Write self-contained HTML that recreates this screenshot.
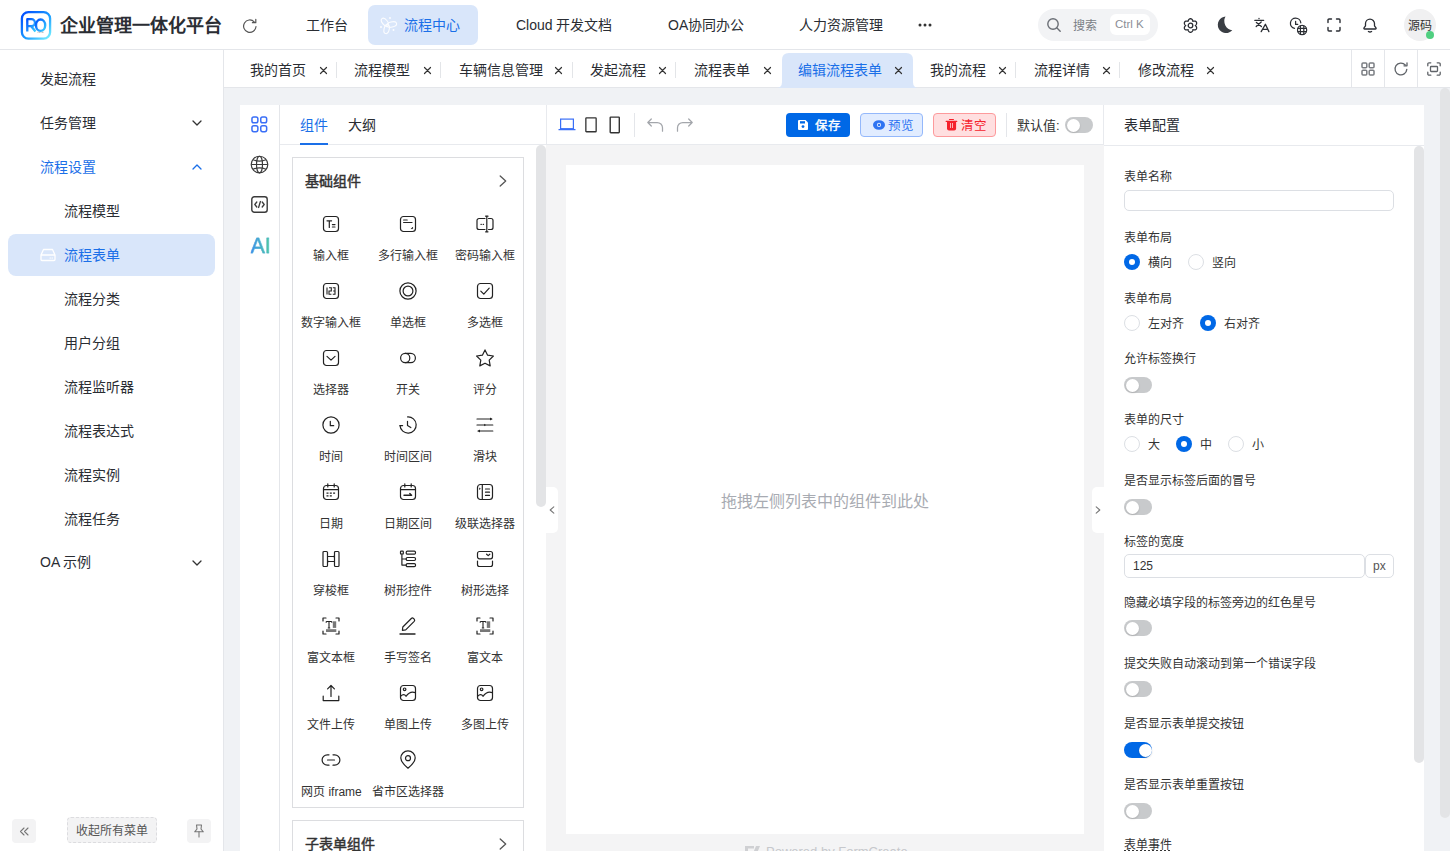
<!DOCTYPE html>
<html lang="zh-CN">
<head>
<meta charset="utf-8">
<style>
*{box-sizing:border-box;margin:0;padding:0}
html,body{width:1450px;height:851px;overflow:hidden;background:#fff}
body{font-family:"Liberation Sans",sans-serif;font-size:14px;color:#262626;position:relative}
.a{position:absolute}
svg{display:block;position:absolute;overflow:visible}
.t{position:absolute;white-space:nowrap;line-height:1}
.ic{fill:none;stroke:#333;stroke-width:1.3;stroke-linecap:round;stroke-linejoin:round}
</style>
</head>
<body>
<!-- ================= HEADER ================= -->
<div class="a" style="left:0;top:0;width:1450px;height:50px;background:#fff;border-bottom:1px solid #e4e6ea"></div>
<!-- logo -->
<svg style="left:20px;top:10px" width="32" height="31" viewBox="0 0 32 31"><defs><linearGradient id="lg" x1="0" y1="0" x2="1" y2="1"><stop offset="0" stop-color="#0048ff"/><stop offset=".55" stop-color="#1a9bff"/><stop offset="1" stop-color="#7af3ff"/></linearGradient><linearGradient id="lg2" x1="0" y1="0" x2="1" y2="1"><stop offset="0" stop-color="#0050ff"/><stop offset="1" stop-color="#3ad0ff"/></linearGradient></defs>
<rect x="1.9" y="2.1" width="28.2" height="26.6" rx="6.5" fill="none" stroke="url(#lg)" stroke-width="2.3"/>
<path d="M7.3 21.5V9.2h4.2a3.5 3.5 0 0 1 0 7H7.3M11.2 16.2l4.3 5.3" fill="none" stroke="url(#lg2)" stroke-width="2.3" stroke-linejoin="round"/>
<ellipse cx="20.6" cy="15.2" rx="4.6" ry="5.7" fill="none" stroke="url(#lg2)" stroke-width="2.4"/>
<path d="M17.5 22.3h6.5" stroke="#888" stroke-width=".6" stroke-dasharray="1 .5"/>
</svg>
<div class="t" style="left:60px;top:17px;font-size:18px;font-weight:bold;color:#2a2d33">企业管理一体化平台</div>
<!-- refresh -->
<svg style="left:242px;top:17.5px" width="16" height="16" viewBox="0 0 16 16"><path d="M14 8.5A6.2 6.2 0 1 1 12.2 3.8" fill="none" stroke="#555" stroke-width="1.2" stroke-linecap="round"/><path d="M13.8 1.3v3.4h-3.4" fill="none" stroke="#555" stroke-width="1.2" stroke-linecap="round" stroke-linejoin="round"/></svg>
<!-- nav -->
<div class="t" style="left:306px;top:18px;font-size:14px;color:#2a2d33">工作台</div>
<div class="a" style="left:368px;top:5px;width:110px;height:40px;border-radius:7px;background:#d9e6fa"></div>
<svg style="left:372px;top:10px" width="30" height="30" viewBox="0 0 30 30"><g fill="none" stroke="#fff" stroke-width="1.1" opacity=".9"><ellipse cx="13.00" cy="12.35" rx="4.82" ry="2.6" transform="rotate(-128.4 13.00 12.35)"/><ellipse cx="19.65" cy="14.50" rx="5.07" ry="2.6" transform="rotate(-13.5 19.65 14.50)"/><ellipse cx="14.65" cy="19.15" rx="4.55" ry="2.6" transform="rotate(103.1 14.65 19.15)"/><circle cx="18" cy="8" r="1" fill="#fff" stroke="none"/><circle cx="9" cy="17" r="1" fill="#fff" stroke="none"/><circle cx="21.5" cy="20" r="1" fill="#fff" stroke="none"/></g></svg>
<div class="t" style="left:404px;top:18px;font-size:14px;color:#1a6fe8">流程中心</div>
<div class="t" style="left:516px;top:18px;font-size:14px;color:#2a2d33">Cloud 开发文档</div>
<div class="t" style="left:668px;top:18px;font-size:14px;color:#2a2d33">OA协同办公</div>
<div class="t" style="left:799px;top:18px;font-size:14px;color:#2a2d33">人力资源管理</div>
<svg style="left:918px;top:23px" width="14" height="4" viewBox="0 0 14 4"><circle cx="2" cy="2" r="1.5" fill="#333"/><circle cx="7" cy="2" r="1.5" fill="#333"/><circle cx="12" cy="2" r="1.5" fill="#333"/></svg>
<!-- search -->
<div class="a" style="left:1038px;top:9px;width:120px;height:32px;border-radius:16px;background:#f2f3f5"></div>
<svg style="left:1047px;top:18px" width="14" height="14" viewBox="0 0 14 14"><circle cx="6" cy="6" r="5.2" fill="none" stroke="#6b6f76" stroke-width="1.4"/><path d="M10 10l3.2 3.2" stroke="#6b6f76" stroke-width="1.4" stroke-linecap="round"/></svg>
<div class="t" style="left:1073px;top:20px;font-size:12px;color:#7a7e85">搜索</div>
<div class="a" style="left:1110px;top:14px;width:40px;height:21px;border-radius:6px;background:#fff"></div>
<div class="t" style="left:1115px;top:19px;font-size:11.5px;color:#8a8e95">Ctrl K</div>
<!-- gear -->
<svg style="left:1182.5px;top:17.5px" width="15" height="15" viewBox="0 0 15 15"><path d="M7.50 0.70 L7.85 0.73 L8.20 0.83 L8.53 1.00 L8.83 1.22 L9.11 1.50 L9.35 1.82 L9.55 2.17 L9.70 2.55 L9.82 2.94 L9.90 3.34 L10.28 3.21 L10.68 3.12 L11.09 3.06 L11.50 3.06 L11.89 3.11 L12.27 3.21 L12.62 3.36 L12.92 3.56 L13.18 3.81 L13.39 4.10 L13.54 4.42 L13.62 4.77 L13.64 5.14 L13.60 5.52 L13.50 5.89 L13.34 6.26 L13.14 6.61 L12.89 6.93 L12.61 7.23 L12.30 7.50 L12.61 7.77 L12.89 8.07 L13.14 8.39 L13.34 8.74 L13.50 9.11 L13.60 9.48 L13.64 9.86 L13.62 10.23 L13.54 10.58 L13.39 10.90 L13.18 11.19 L12.92 11.44 L12.62 11.64 L12.27 11.79 L11.89 11.89 L11.50 11.94 L11.09 11.94 L10.68 11.88 L10.28 11.79 L9.90 11.66 L9.82 12.06 L9.70 12.45 L9.55 12.83 L9.35 13.18 L9.11 13.50 L8.83 13.78 L8.53 14.00 L8.20 14.17 L7.85 14.27 L7.50 14.30 L7.15 14.27 L6.80 14.17 L6.47 14.00 L6.17 13.78 L5.89 13.50 L5.65 13.18 L5.45 12.83 L5.30 12.45 L5.18 12.06 L5.10 11.66 L4.72 11.79 L4.32 11.88 L3.91 11.94 L3.50 11.94 L3.11 11.89 L2.73 11.79 L2.38 11.64 L2.08 11.44 L1.82 11.19 L1.61 10.90 L1.46 10.58 L1.38 10.23 L1.36 9.86 L1.40 9.48 L1.50 9.11 L1.66 8.74 L1.86 8.39 L2.11 8.07 L2.39 7.77 L2.70 7.50 L2.39 7.23 L2.11 6.93 L1.86 6.61 L1.66 6.26 L1.50 5.89 L1.40 5.52 L1.36 5.14 L1.38 4.77 L1.46 4.42 L1.61 4.10 L1.82 3.81 L2.08 3.56 L2.38 3.36 L2.73 3.21 L3.11 3.11 L3.50 3.06 L3.91 3.06 L4.32 3.12 L4.72 3.21 L5.10 3.34 L5.18 2.94 L5.30 2.55 L5.45 2.17 L5.65 1.82 L5.89 1.50 L6.17 1.22 L6.47 1.00 L6.80 0.83 L7.15 0.73 L7.50 0.70Z" fill="none" stroke="#2a2d33" stroke-width="1.3" stroke-linejoin="round"/><circle cx="7.5" cy="7.5" r="2.3" fill="none" stroke="#2a2d33" stroke-width="1.3"/></svg>
<!-- moon -->
<svg style="left:1216px;top:15px" width="18" height="19" viewBox="0 0 18 19"><path d="M9.5 1.5A8.3 8.3 0 1 0 16.3 15.3A9.3 9.3 0 0 1 9.5 1.5Z" fill="#3a3e44"/></svg>
<!-- translate -->
<svg style="left:1250px;top:12px" width="22" height="24" viewBox="0 0 22 24"><g fill="none" stroke="#2a2d33" stroke-width="1.3" stroke-linecap="round" stroke-linejoin="round"><path d="M4.8 8.3h8.9M9 6.3v.3M11.2 10L6.2 14.6M6.4 10.4l5 4.2"/><path d="M11.2 19.6l4.2-7.4 3.5 7.4M12.6 17.3h5"/></g></svg>
<!-- timezone -->
<svg style="left:1286.7px;top:12.6px" width="24" height="24" viewBox="0 0 24 24"><g fill="none" stroke="#2a2d33" stroke-width="1.25" stroke-linecap="round"><path d="M7.5 15.4A5.2 5.2 0 1 1 13.8 9.8"/><path d="M8.6 8.3v3h2.2"/></g><g fill="none" stroke="#2a2d33" stroke-width="1.2"><circle cx="15.1" cy="17" r="4.6"/><path d="M10.5 15.3h9.2M10.5 18.7h9.2M13.4 12.4v9.2M16.8 12.4v9.2"/></g></svg>
<!-- fullscreen -->
<svg style="left:1327px;top:18px" width="14" height="14" viewBox="0 0 14 14"><path d="M1 4.5V2a1 1 0 0 1 1-1h2.5M9.5 1H12a1 1 0 0 1 1 1v2.5M13 9.5V12a1 1 0 0 1-1 1H9.5M4.5 13H2a1 1 0 0 1-1-1V9.5" fill="none" stroke="#2a2d33" stroke-width="1.4" stroke-linecap="round"/></svg>
<!-- bell -->
<svg style="left:1363px;top:17.5px" width="14" height="16" viewBox="0 0 14 16"><path d="M1.6 11h10.8a.7.7 0 0 0 .6-1.1L11.5 7.8V5.6A4.5 4.5 0 0 0 2.5 5.6v2.2L1 9.9a.7.7 0 0 0 .6 1.1z" fill="none" stroke="#2a2d33" stroke-width="1.3" stroke-linejoin="round"/><path d="M5.4 13.5q1.6 1 3.2 0" fill="none" stroke="#2a2d33" stroke-width="1.3" stroke-linecap="round"/></svg>
<!-- avatar -->
<div class="a" style="left:1404px;top:9px;width:32px;height:32px;border-radius:50%;background:#f0f0f1"></div>
<div class="t" style="left:1408px;top:20px;font-size:12px;color:#333">源码</div>
<div class="a" style="left:1426px;top:31px;width:8px;height:8px;border-radius:50%;background:#50cf80"></div>

<!-- ================= SIDEBAR ================= -->
<div class="a" style="left:0;top:50px;width:224px;height:801px;background:#fff;border-right:1px solid #e4e6ea"></div>
<div class="t" style="left:40px;top:72px;font-size:14px;color:#2a2d33">发起流程</div>
<div class="t" style="left:40px;top:116px;font-size:14px;color:#2a2d33">任务管理</div>
<svg style="left:192px;top:120px" width="10" height="6" viewBox="0 0 10 6"><path d="M1 1l4 4 4-4" fill="none" stroke="#333" stroke-width="1.3" stroke-linecap="round" stroke-linejoin="round"/></svg>
<div class="t" style="left:40px;top:160px;font-size:14px;color:#1a6fe8">流程设置</div>
<svg style="left:192px;top:164px" width="10" height="6" viewBox="0 0 10 6"><path d="M1 5l4-4 4 4" fill="none" stroke="#1a6fe8" stroke-width="1.3" stroke-linecap="round" stroke-linejoin="round"/></svg>
<div class="t" style="left:64px;top:204px;font-size:14px;color:#2a2d33">流程模型</div>
<div class="a" style="left:8px;top:234px;width:207px;height:42px;border-radius:8px;background:#d9e6fa"></div>
<svg style="left:40px;top:248px" width="16" height="14" viewBox="0 0 16 14"><path d="M1 7L3.5 1.5h9L15 7v4.5a1 1 0 0 1-1 1H2a1 1 0 0 1-1-1z M1 7h14" fill="none" stroke="#fff" stroke-width="1.3" stroke-linejoin="round"/><path d="M10 10h.5M12 10h.5" stroke="#fff" stroke-width="1.2" stroke-linecap="round"/></svg>
<div class="t" style="left:64px;top:248px;font-size:14px;color:#1a6fe8">流程表单</div>
<div class="t" style="left:64px;top:292px;font-size:14px;color:#2a2d33">流程分类</div>
<div class="t" style="left:64px;top:336px;font-size:14px;color:#2a2d33">用户分组</div>
<div class="t" style="left:64px;top:380px;font-size:14px;color:#2a2d33">流程监听器</div>
<div class="t" style="left:64px;top:424px;font-size:14px;color:#2a2d33">流程表达式</div>
<div class="t" style="left:64px;top:468px;font-size:14px;color:#2a2d33">流程实例</div>
<div class="t" style="left:64px;top:512px;font-size:14px;color:#2a2d33">流程任务</div>
<div class="t" style="left:40px;top:555px;font-size:14px;color:#2a2d33">OA 示例</div>
<svg style="left:192px;top:560px" width="10" height="6" viewBox="0 0 10 6"><path d="M1 1l4 4 4-4" fill="none" stroke="#333" stroke-width="1.3" stroke-linecap="round" stroke-linejoin="round"/></svg>
<!-- sidebar footer -->
<div class="a" style="left:12px;top:819px;width:24px;height:24px;border-radius:4px;background:#f3f3f4"></div>
<svg style="left:19px;top:827px" width="10" height="9" viewBox="0 0 10 9"><path d="M5 1L1.5 4.5 5 8M9 1L5.5 4.5 9 8" fill="none" stroke="#777" stroke-width="1.1" stroke-linecap="round" stroke-linejoin="round"/></svg>
<div class="a" style="left:67px;top:817px;width:90px;height:26px;border-radius:4px;background:#f3f3f4;border:1px dashed #dcdcdf"></div>
<div class="t" style="left:76px;top:825px;font-size:12px;color:#555">收起所有菜单</div>
<div class="a" style="left:187px;top:819px;width:24px;height:24px;border-radius:4px;background:#f3f3f4"></div>
<svg style="left:193px;top:824px" width="12" height="14" viewBox="0 0 12 14"><path d="M3.5 1h5L8 5l2.3 2.8H1.7L4 5z" fill="none" stroke="#777" stroke-width="1.1" stroke-linejoin="round"/><path d="M6 7.8V13" stroke="#777" stroke-width="1.1" stroke-linecap="round"/></svg>

<!-- ================= TABS ================= -->
<div class="a" style="left:224px;top:50px;width:1226px;height:38px;background:#fff;border-bottom:1px solid #e4e6ea"></div>
<svg style="left:776px;top:53px" width="143" height="35" viewBox="0 0 143 35"><path d="M0 35 Q6 35 6 29 V7 Q6 0 13 0 H130 Q137 0 137 7 V29 Q137 35 143 35 Z" fill="#d9e6fa"/></svg>
<div class="t" style="left:250px;top:63px;font-size:14px;color:#2a2d33">我的首页</div>
<svg style="left:319.5px;top:67px" width="7" height="7" viewBox="0 0 7 7"><path d="M.5 .5l6 6M6.5 .5l-6 6" stroke="#333" stroke-width="1.2" stroke-linecap="round"/></svg>
<div class="a" style="left:336px;top:62px;width:1px;height:16px;background:#e3e5e8"></div>
<div class="t" style="left:354px;top:63px;font-size:14px;color:#2a2d33">流程模型</div>
<svg style="left:423.5px;top:67px" width="7" height="7" viewBox="0 0 7 7"><path d="M.5 .5l6 6M6.5 .5l-6 6" stroke="#333" stroke-width="1.2" stroke-linecap="round"/></svg>
<div class="a" style="left:440px;top:62px;width:1px;height:16px;background:#e3e5e8"></div>
<div class="t" style="left:458.5px;top:63px;font-size:14px;color:#2a2d33">车辆信息管理</div>
<svg style="left:555.0px;top:67px" width="7" height="7" viewBox="0 0 7 7"><path d="M.5 .5l6 6M6.5 .5l-6 6" stroke="#333" stroke-width="1.2" stroke-linecap="round"/></svg>
<div class="a" style="left:572px;top:62px;width:1px;height:16px;background:#e3e5e8"></div>
<div class="t" style="left:590px;top:63px;font-size:14px;color:#2a2d33">发起流程</div>
<svg style="left:659.0px;top:67px" width="7" height="7" viewBox="0 0 7 7"><path d="M.5 .5l6 6M6.5 .5l-6 6" stroke="#333" stroke-width="1.2" stroke-linecap="round"/></svg>
<div class="a" style="left:675px;top:62px;width:1px;height:16px;background:#e3e5e8"></div>
<div class="t" style="left:694px;top:63px;font-size:14px;color:#2a2d33">流程表单</div>
<svg style="left:763.5px;top:67px" width="7" height="7" viewBox="0 0 7 7"><path d="M.5 .5l6 6M6.5 .5l-6 6" stroke="#333" stroke-width="1.2" stroke-linecap="round"/></svg>
<div class="t" style="left:798px;top:63px;font-size:14px;color:#1a6fe8">编辑流程表单</div>
<svg style="left:895.2px;top:67px" width="7" height="7" viewBox="0 0 7 7"><path d="M.5 .5l6 6M6.5 .5l-6 6" stroke="#333" stroke-width="1.2" stroke-linecap="round"/></svg>
<div class="t" style="left:930px;top:63px;font-size:14px;color:#2a2d33">我的流程</div>
<svg style="left:999.0px;top:67px" width="7" height="7" viewBox="0 0 7 7"><path d="M.5 .5l6 6M6.5 .5l-6 6" stroke="#333" stroke-width="1.2" stroke-linecap="round"/></svg>
<div class="a" style="left:1015px;top:62px;width:1px;height:16px;background:#e3e5e8"></div>
<div class="t" style="left:1034px;top:63px;font-size:14px;color:#2a2d33">流程详情</div>
<svg style="left:1102.5px;top:67px" width="7" height="7" viewBox="0 0 7 7"><path d="M.5 .5l6 6M6.5 .5l-6 6" stroke="#333" stroke-width="1.2" stroke-linecap="round"/></svg>
<div class="a" style="left:1119px;top:62px;width:1px;height:16px;background:#e3e5e8"></div>
<div class="t" style="left:1138px;top:63px;font-size:14px;color:#2a2d33">修改流程</div>
<svg style="left:1207.0px;top:67px" width="7" height="7" viewBox="0 0 7 7"><path d="M.5 .5l6 6M6.5 .5l-6 6" stroke="#333" stroke-width="1.2" stroke-linecap="round"/></svg>
<div class="a" style="left:1351px;top:50px;width:1px;height:37px;background:#e4e6ea"></div>
<div class="a" style="left:1384px;top:50px;width:1px;height:37px;background:#e4e6ea"></div>
<div class="a" style="left:1417px;top:50px;width:1px;height:37px;background:#e4e6ea"></div>
<svg style="left:1361px;top:62px" width="14" height="14" viewBox="0 0 14 14"><g fill="none" stroke="#7a7d82" stroke-width="1.5"><rect x="1" y="1" width="4.8" height="4.8" rx="1"/><rect x="8.2" y="1" width="4.8" height="4.8" rx="1"/><rect x="1" y="8.2" width="4.8" height="4.8" rx="1"/><rect x="8.2" y="8.2" width="4.8" height="4.8" rx="1"/></g></svg>
<svg style="left:1394px;top:62px" width="14" height="14" viewBox="0 0 14 14"><path d="M12.8 7.4A5.9 5.9 0 1 1 11.3 3" fill="none" stroke="#5f6368" stroke-width="1.3" stroke-linecap="round"/><path d="M13 .8v3H10" fill="none" stroke="#5f6368" stroke-width="1.3" stroke-linecap="round" stroke-linejoin="round"/></svg>
<svg style="left:1427px;top:62px" width="14" height="14" viewBox="0 0 14 14"><g fill="none" stroke="#5f6368" stroke-width="1.3" stroke-linecap="round"><path d="M.8 3.8V2A1.2 1.2 0 0 1 2 .8h1.8M10.2 .8H12A1.2 1.2 0 0 1 13.2 2v1.8M13.2 10.2V12A1.2 1.2 0 0 1 12 13.2h-1.8M3.8 13.2H2A1.2 1.2 0 0 1 .8 12v-1.8"/><rect x="3.5" y="4.5" width="7" height="5" rx=".8"/></g></svg>

<!-- ================= MAIN ================= -->
<div class="a" style="left:224px;top:88px;width:1226px;height:763px;background:#f0f2f5"></div>
<!-- MAIN_START -->
<div class="a" style="left:240px;top:105px;width:40px;height:746px;background:#fff;border-right:1px solid #e4e6ea"></div>
<svg style="left:251px;top:116px" width="17" height="17" viewBox="0 0 17 17"><g fill="none" stroke="#3a6ff7" stroke-width="1.5"><rect x=".95" y=".95" width="5.9" height="5.9" rx="1.8"/><rect x="9.75" y=".95" width="5.9" height="5.9" rx="1.8"/><rect x=".95" y="9.75" width="5.9" height="5.9" rx="1.8"/><rect x="9.75" y="9.75" width="5.9" height="5.9" rx="1.8"/></g></svg>
<svg style="left:250px;top:155px" width="19" height="19" viewBox="0 0 19 19"><g fill="none" stroke="#3a3a3a" stroke-width="1.15"><circle cx="9.5" cy="9.5" r="8.3"/><ellipse cx="9.5" cy="9.5" rx="3" ry="8.3"/><path d="M1.2 9.5h16.6M3 4.8Q9.5 7.6 16 4.8M3 14.2Q9.5 11.4 16 14.2"/></g></svg>
<svg style="left:251px;top:196px" width="17" height="17" viewBox="0 0 17 17"><rect x=".8" y=".8" width="15.4" height="15.4" rx="2.5" fill="none" stroke="#3a3a3a" stroke-width="1.4"/><path d="M5.8 6L3.8 8.5l2 2.5M11.2 6l2 2.5-2 2.5M9.4 5.5L7.6 11.5" fill="none" stroke="#3a3a3a" stroke-width="1.3" stroke-linecap="round" stroke-linejoin="round"/></svg>
<div class="t" style="left:250.5px;top:236px;font-size:21.5px;font-weight:normal;-webkit-text-stroke:.35px #45a8d8;letter-spacing:-.2px;background:linear-gradient(90deg,#3d8ef0,#4fd39a);-webkit-background-clip:text;background-clip:text;color:transparent">AI</div>
<div class="a" style="left:280px;top:105px;width:266px;height:746px;background:#fff"></div>
<div class="a" style="left:546px;top:105px;width:1px;height:40px;background:#e8eaee"></div>
<div class="a" style="left:280px;top:144px;width:266px;height:1px;background:#e8eaee"></div>
<div class="t" style="left:300px;top:118px;font-size:14px;color:#1a6fe8">组件</div>
<div class="a" style="left:300px;top:143px;width:28px;height:2px;background:#1a6fe8"></div>
<div class="t" style="left:348px;top:118px;font-size:14px;color:#2a2d33">大纲</div>
<div class="a" style="left:536px;top:145px;width:10px;height:362px;border-radius:5px;background:#e3e4e6"></div>
<div class="a" style="left:292px;top:157px;width:232px;height:651px;border:1px solid #dcdde0"></div>
<div class="t" style="left:305px;top:174px;font-size:14px;font-weight:normal;-webkit-text-stroke:.45px #333;color:#333">基础组件</div>
<svg style="left:499px;top:175px" width="8" height="12" viewBox="0 0 8 12"><path d="M1.2 1l5.5 5-5.5 5" fill="none" stroke="#555" stroke-width="1.3" stroke-linecap="round" stroke-linejoin="round"/></svg>
<svg style="left:322.4px;top:215px" width="18" height="18" viewBox="0 0 18 18"><rect x="1.5" y="1.5" width="15" height="15" rx="3" fill="none" stroke="#222" stroke-width="1.2" stroke-linecap="round" stroke-linejoin="round"/><path d="M5 5.8h4.6M7.3 5.8v6.6M10.4 9.6h2.6M10.4 12h2.6" fill="none" stroke="#222" stroke-width="1.2" stroke-linecap="round" stroke-linejoin="round"/></svg>
<div class="t" style="left:281.4px;width:100px;text-align:center;top:250px;font-size:12px;color:#333">输入框</div>
<svg style="left:399px;top:215px" width="18" height="18" viewBox="0 0 18 18"><rect x="1.5" y="1.5" width="15" height="15" rx="3" fill="none" stroke="#222" stroke-width="1.2" stroke-linecap="round" stroke-linejoin="round"/><path d="M4.6 5h3.6M4.6 7.5h8.4" fill="none" stroke="#222" stroke-width="1.2" stroke-linecap="round" stroke-linejoin="round"/><path d="M13.6 12.3v1.3h-1.3z" fill="#222" stroke="#222" stroke-width=".8" stroke-linejoin="round"/></svg>
<div class="t" style="left:358px;width:100px;text-align:center;top:250px;font-size:12px;color:#333">多行输入框</div>
<svg style="left:475.6px;top:215px" width="18" height="18" viewBox="0 0 18 18"><path d="M9 3.5H3A2 2 0 0 0 1 5.5v7a2 2 0 0 0 2 2h6M12.5 3.5H15a2 2 0 0 1 2 2v7a2 2 0 0 1-2 2h-2.5M10.8 1.2v15.6M9.6 1.2h2.4M9.6 16.8h2.4" fill="none" stroke="#222" stroke-width="1.2" stroke-linecap="round" stroke-linejoin="round"/><path d="M5 9.3h.3M7.2 9.3h.3" stroke="#222" stroke-width="1.3" stroke-linecap="round"/></svg>
<div class="t" style="left:434.6px;width:100px;text-align:center;top:250px;font-size:12px;color:#333">密码输入框</div>
<svg style="left:322.4px;top:282px" width="18" height="18" viewBox="0 0 18 18"><rect x="1.5" y="1.5" width="15" height="15" rx="3" fill="none" stroke="#222" stroke-width="1.2" stroke-linecap="round" stroke-linejoin="round"/><path d="M5 5.5v7M7 5.8h2.3v3.2H7v3.3h2.4M10.8 5.8h2.2v6.5h-2.2M11.2 9h1.8" fill="none" stroke="#222" stroke-width="1.1" stroke-linejoin="miter"/></svg>
<div class="t" style="left:281.4px;width:100px;text-align:center;top:317px;font-size:12px;color:#333">数字输入框</div>
<svg style="left:399px;top:282px" width="18" height="18" viewBox="0 0 18 18"><circle cx="9" cy="9" r="8.1" fill="none" stroke="#222" stroke-width="1.2" stroke-linecap="round" stroke-linejoin="round"/><circle cx="9" cy="9" r="4.9" fill="none" stroke="#222" stroke-width="1.2" stroke-linecap="round" stroke-linejoin="round"/></svg>
<div class="t" style="left:358px;width:100px;text-align:center;top:317px;font-size:12px;color:#333">单选框</div>
<svg style="left:475.6px;top:282px" width="18" height="18" viewBox="0 0 18 18"><rect x="1.5" y="1.5" width="15" height="15" rx="3" fill="none" stroke="#222" stroke-width="1.2" stroke-linecap="round" stroke-linejoin="round"/><path d="M4.8 9.2l3 3 5.4-6" fill="none" stroke="#222" stroke-width="1.2" stroke-linecap="round" stroke-linejoin="round"/></svg>
<div class="t" style="left:434.6px;width:100px;text-align:center;top:317px;font-size:12px;color:#333">多选框</div>
<svg style="left:322.4px;top:349px" width="18" height="18" viewBox="0 0 18 18"><rect x="1.5" y="1.5" width="15" height="15" rx="3" fill="none" stroke="#222" stroke-width="1.2" stroke-linecap="round" stroke-linejoin="round"/><path d="M5 7.4l4 3.7 4-3.7" fill="none" stroke="#222" stroke-width="1.2" stroke-linecap="round" stroke-linejoin="round"/></svg>
<div class="t" style="left:281.4px;width:100px;text-align:center;top:384px;font-size:12px;color:#333">选择器</div>
<svg style="left:399px;top:349px" width="18" height="18" viewBox="0 0 18 18"><circle cx="6.2" cy="9" r="4.6" fill="none" stroke="#222" stroke-width="1.2" stroke-linecap="round" stroke-linejoin="round"/><path d="M6.2 4.4h5.6a4.6 4.6 0 0 1 0 9.2H6.2" fill="none" stroke="#222" stroke-width="1.2" stroke-linecap="round" stroke-linejoin="round"/></svg>
<div class="t" style="left:358px;width:100px;text-align:center;top:384px;font-size:12px;color:#333">开关</div>
<svg style="left:475.6px;top:349px" width="18" height="18" viewBox="0 0 18 18"><path d="M9 .9l2.6 5.3 5.8.8-4.2 4.1 1 5.8L9 14.2l-5.2 2.7 1-5.8L.6 7l5.8-.8z" fill="none" stroke="#222" stroke-width="1.2" stroke-linecap="round" stroke-linejoin="round"/></svg>
<div class="t" style="left:434.6px;width:100px;text-align:center;top:384px;font-size:12px;color:#333">评分</div>
<svg style="left:322.4px;top:416px" width="18" height="18" viewBox="0 0 18 18"><circle cx="9" cy="9" r="8.1" fill="none" stroke="#222" stroke-width="1.2" stroke-linecap="round" stroke-linejoin="round"/><path d="M8.3 5.3v4.4h3.4" fill="none" stroke="#222" stroke-width="1.2" stroke-linecap="round" stroke-linejoin="round"/></svg>
<div class="t" style="left:281.4px;width:100px;text-align:center;top:451px;font-size:12px;color:#333">时间</div>
<svg style="left:399px;top:416px" width="18" height="18" viewBox="0 0 18 18"><path d="M8.6 .9A8.1 8.1 0 1 1 1 9.6" fill="none" stroke="#222" stroke-width="1.2" stroke-linecap="round" stroke-linejoin="round"/><path d="M1 9.6h2.6" fill="none" stroke="#222" stroke-width="1.2" stroke-linecap="round" stroke-linejoin="round"/><path d="M8.5 5.3v4.2l3.3 2.1" fill="none" stroke="#222" stroke-width="1.2" stroke-linecap="round" stroke-linejoin="round"/></svg>
<div class="t" style="left:358px;width:100px;text-align:center;top:451px;font-size:12px;color:#333">时间区间</div>
<svg style="left:475.6px;top:416px" width="18" height="18" viewBox="0 0 18 18"><path d="M1 3h14.8M1 9h15.8M2 15h14.8" fill="none" stroke="#222" stroke-width="1.2" stroke-linecap="round" stroke-linejoin="round"/><path d="M14 1.5l2.3 1.5-2.3 1.5zM8.2 7.7l1.8 1.3-1.8 1.3zM4 13.5L1.7 15 4 16.5z" fill="#222"/></svg>
<div class="t" style="left:434.6px;width:100px;text-align:center;top:451px;font-size:12px;color:#333">滑块</div>
<svg style="left:322.4px;top:483px" width="18" height="18" viewBox="0 0 18 18"><rect x="1.5" y="2.5" width="15" height="14" rx="3" fill="none" stroke="#222" stroke-width="1.2" stroke-linecap="round" stroke-linejoin="round"/><path d="M1.5 6.6h15M5.8 .8v3.2M12.2 .8v3.2" fill="none" stroke="#222" stroke-width="1.2" stroke-linecap="round" stroke-linejoin="round"/><path d="M4.5 10.2h2M7.8 10.2h2M11.1 10.2h2M4.5 12.8h2M7.8 12.8h2" stroke="#222" stroke-width="1.2"/></svg>
<div class="t" style="left:281.4px;width:100px;text-align:center;top:518px;font-size:12px;color:#333">日期</div>
<svg style="left:399px;top:483px" width="18" height="18" viewBox="0 0 18 18"><rect x="1.5" y="2.5" width="15" height="14" rx="3" fill="none" stroke="#222" stroke-width="1.2" stroke-linecap="round" stroke-linejoin="round"/><path d="M1.5 6.6h15M5.8 .8v3.2M12.2 .8v3.2" fill="none" stroke="#222" stroke-width="1.2" stroke-linecap="round" stroke-linejoin="round"/><path d="M5 12.2h7.6l-1.8-1.6" fill="none" stroke="#222" stroke-width="1.4" stroke-linecap="round" stroke-linejoin="round"/></svg>
<div class="t" style="left:358px;width:100px;text-align:center;top:518px;font-size:12px;color:#333">日期区间</div>
<svg style="left:475.6px;top:483px" width="18" height="18" viewBox="0 0 18 18"><rect x="1.5" y="1.5" width="15" height="15" rx="3" fill="none" stroke="#222" stroke-width="1.2" stroke-linecap="round" stroke-linejoin="round"/><path d="M6.3 1.5v15M9.5 6h4M9.5 9.2h4M9.5 12.4h4" fill="none" stroke="#222" stroke-width="1.2" stroke-linecap="round" stroke-linejoin="round"/><path d="M3.2 4.5l1.6 1.2-1.6 1.2z" fill="#222"/></svg>
<div class="t" style="left:434.6px;width:100px;text-align:center;top:518px;font-size:12px;color:#333">级联选择器</div>
<svg style="left:322.4px;top:550px" width="18" height="18" viewBox="0 0 18 18"><rect x="1" y="1.5" width="4.5" height="15" rx="1" fill="none" stroke="#222" stroke-width="1.2" stroke-linecap="round" stroke-linejoin="round"/><rect x="12.5" y="1.5" width="4.5" height="15" rx="1" fill="none" stroke="#222" stroke-width="1.2" stroke-linecap="round" stroke-linejoin="round"/><path d="M5.5 6.5h7M5.5 11.5h7" stroke="#222" stroke-width="1"/><path d="M11.2 5.6l1.3.9-1.3.9zM6.8 10.6l-1.3.9 1.3.9z" fill="#222"/></svg>
<div class="t" style="left:281.4px;width:100px;text-align:center;top:585px;font-size:12px;color:#333">穿梭框</div>
<svg style="left:399px;top:550px" width="18" height="18" viewBox="0 0 18 18"><rect x="1.5" y="1.2" width="2.8" height="2.8" rx=".6" fill="none" stroke="#222" stroke-width="1.2" stroke-linecap="round" stroke-linejoin="round"/><rect x="7.2" y="1.2" width="9.3" height="3" rx="1.2" fill="none" stroke="#222" stroke-width="1.2" stroke-linecap="round" stroke-linejoin="round"/><rect x="7.2" y="7.5" width="9.3" height="3" rx="1.2" fill="none" stroke="#222" stroke-width="1.2" stroke-linecap="round" stroke-linejoin="round"/><rect x="7.2" y="13.6" width="9.3" height="3" rx="1.2" fill="none" stroke="#222" stroke-width="1.2" stroke-linecap="round" stroke-linejoin="round"/><path d="M2.9 4v11.1h4.3M2.9 9h4.3" fill="none" stroke="#222" stroke-width="1.2" stroke-linecap="round" stroke-linejoin="round"/></svg>
<div class="t" style="left:358px;width:100px;text-align:center;top:585px;font-size:12px;color:#333">树形控件</div>
<svg style="left:475.6px;top:550px" width="18" height="18" viewBox="0 0 18 18"><rect x="1.5" y="1.5" width="15" height="7.3" rx="2" fill="none" stroke="#222" stroke-width="1.2" stroke-linecap="round" stroke-linejoin="round"/><path d="M1.5 11v3.5a2 2 0 0 0 2 2h11a2 2 0 0 0 2-2V11" fill="none" stroke="#222" stroke-width="1.2" stroke-linecap="round" stroke-linejoin="round"/><path d="M10.6 4.2l1.6 1.4 1.6-1.4" fill="none" stroke="#222" stroke-width="1.2" stroke-linecap="round" stroke-linejoin="round"/></svg>
<div class="t" style="left:434.6px;width:100px;text-align:center;top:585px;font-size:12px;color:#333">树形选择</div>
<svg style="left:322.4px;top:617px" width="18" height="18" viewBox="0 0 18 18"><path d="M1 4V1h3M14 1h3v3M17 14v3h-3M4 17H1v-3" fill="none" stroke="#222" stroke-width="1.2" stroke-linecap="round" stroke-linejoin="round"/><path d="M4.2 4.5h5.6M4.2 4.5v1.2M9.8 4.5v1.2M7 4.5v6.5M5.8 11h2.4" fill="none" stroke="#222" stroke-width="1.1"/><rect x="10.8" y="4.3" width="3.4" height="6.6" fill="#777"/><rect x="4" y="12.2" width="10.3" height="2.8" fill="#777"/></svg>
<div class="t" style="left:281.4px;width:100px;text-align:center;top:652px;font-size:12px;color:#333">富文本框</div>
<svg style="left:399px;top:617px" width="18" height="18" viewBox="0 0 18 18"><path d="M3.4 13.3l.4-3.3 8.5-8.5a1.6 1.6 0 0 1 2.2 0l.7.7a1.6 1.6 0 0 1 0 2.2L6.7 12.9z" fill="none" stroke="#222" stroke-width="1.2" stroke-linecap="round" stroke-linejoin="round"/><path d="M1 17h15" stroke="#222" stroke-width="1.4" stroke-linecap="round"/></svg>
<div class="t" style="left:358px;width:100px;text-align:center;top:652px;font-size:12px;color:#333">手写签名</div>
<svg style="left:475.6px;top:617px" width="18" height="18" viewBox="0 0 18 18"><path d="M1 4V1h3M14 1h3v3M17 14v3h-3M4 17H1v-3" fill="none" stroke="#222" stroke-width="1.2" stroke-linecap="round" stroke-linejoin="round"/><path d="M4.2 4.5h5.6M4.2 4.5v1.2M9.8 4.5v1.2M7 4.5v6.5M5.8 11h2.4" fill="none" stroke="#222" stroke-width="1.1"/><rect x="10.8" y="4.3" width="3.4" height="6.6" fill="#777"/><rect x="4" y="12.2" width="10.3" height="2.8" fill="#777"/></svg>
<div class="t" style="left:434.6px;width:100px;text-align:center;top:652px;font-size:12px;color:#333">富文本</div>
<svg style="left:322.4px;top:684px" width="18" height="18" viewBox="0 0 18 18"><path d="M1.2 12v4.6h15.6V12M9 1.5V12.5M5.6 4.9L9 1.5l3.4 3.4" fill="none" stroke="#222" stroke-width="1.2" stroke-linecap="round" stroke-linejoin="round"/></svg>
<div class="t" style="left:281.4px;width:100px;text-align:center;top:719px;font-size:12px;color:#333">文件上传</div>
<svg style="left:399px;top:684px" width="18" height="18" viewBox="0 0 18 18"><rect x="1.5" y="1.5" width="15" height="15" rx="3" fill="none" stroke="#222" stroke-width="1.2" stroke-linecap="round" stroke-linejoin="round"/><circle cx="5.6" cy="5.3" r="1.3" fill="none" stroke="#222" stroke-width="1.2" stroke-linecap="round" stroke-linejoin="round"/><path d="M1.6 12.2Q5 9 7 12.3Q11 6.5 16.4 8.6" fill="none" stroke="#222" stroke-width="1.2" stroke-linecap="round" stroke-linejoin="round"/></svg>
<div class="t" style="left:358px;width:100px;text-align:center;top:719px;font-size:12px;color:#333">单图上传</div>
<svg style="left:475.6px;top:684px" width="18" height="18" viewBox="0 0 18 18"><rect x="1.5" y="1.5" width="15" height="15" rx="3" fill="none" stroke="#222" stroke-width="1.2" stroke-linecap="round" stroke-linejoin="round"/><circle cx="5.6" cy="5.3" r="1.3" fill="none" stroke="#222" stroke-width="1.2" stroke-linecap="round" stroke-linejoin="round"/><path d="M1.6 12.2Q5 9 7 12.3Q11 6.5 16.4 8.6" fill="none" stroke="#222" stroke-width="1.2" stroke-linecap="round" stroke-linejoin="round"/></svg>
<div class="t" style="left:434.6px;width:100px;text-align:center;top:719px;font-size:12px;color:#333">多图上传</div>
<svg style="left:322.4px;top:751px" width="18" height="18" viewBox="0 0 18 18"><path d="M7 3.8H5.3a5.2 5.2 0 0 0 0 10.4H7M11 3.8h1.7a5.2 5.2 0 0 1 0 10.4H11M5.5 9h7" fill="none" stroke="#222" stroke-width="1.2" stroke-linecap="round" stroke-linejoin="round"/></svg>
<div class="t" style="left:281.4px;width:100px;text-align:center;top:786px;font-size:12px;color:#333">网页 iframe</div>
<svg style="left:399px;top:751px" width="18" height="18" viewBox="0 0 18 18"><path d="M9 17.2S1.8 11.2 1.8 7.1a7.2 7.2 0 0 1 14.4 0c0 4.1-7.2 10.1-7.2 10.1z" fill="none" stroke="#222" stroke-width="1.2" stroke-linecap="round" stroke-linejoin="round"/><circle cx="9" cy="7.2" r="2.5" fill="none" stroke="#222" stroke-width="1.2" stroke-linecap="round" stroke-linejoin="round"/></svg>
<div class="t" style="left:358px;width:100px;text-align:center;top:786px;font-size:12px;color:#333">省市区选择器</div>
<div class="a" style="left:292px;top:820px;width:232px;height:40px;border:1px solid #dcdde0"></div>
<div class="t" style="left:305px;top:837px;font-size:14px;font-weight:normal;-webkit-text-stroke:.45px #333;color:#333">子表单组件</div>
<svg style="left:499px;top:838px" width="8" height="12" viewBox="0 0 8 12"><path d="M1.2 1l5.5 5-5.5 5" fill="none" stroke="#555" stroke-width="1.3" stroke-linecap="round" stroke-linejoin="round"/></svg>
<div class="a" style="left:547px;top:105px;width:557px;height:40px;background:#fff;border-bottom:1px solid #e8eaee"></div>
<div class="a" style="left:546px;top:145px;width:558px;height:706px;background:#f4f4f5"></div>
<div class="a" style="left:566px;top:165px;width:518px;height:669px;background:#fff"></div>
<div class="t" style="left:721px;top:494px;font-size:16px;color:#a8abb2">拖拽左侧列表中的组件到此处</div>
<svg style="left:745px;top:846px" width="16" height="6" viewBox="0 0 16 6"><path d="M0 0H9V2.5H3V6H0z M11 0H15L12.5 6H8.5z" fill="#cfd0d3"/></svg>
<div class="t" style="left:766px;top:845px;font-size:13px;color:#c6c8cc">Powered by FormCreate</div>
<div class="a" style="left:546px;top:487px;width:12px;height:46px;background:#fff;border-radius:0 5px 5px 0"></div>
<svg style="left:549px;top:506px" width="6" height="8" viewBox="0 0 6 8"><path d="M4.8 .8L1.2 4l3.6 3.2" fill="none" stroke="#777" stroke-width="1.1" stroke-linecap="round" stroke-linejoin="round"/></svg>
<div class="a" style="left:1092px;top:487px;width:12px;height:46px;background:#fff;border-radius:5px 0 0 5px"></div>
<svg style="left:1095px;top:506px" width="6" height="8" viewBox="0 0 6 8"><path d="M1.2 .8L4.8 4 1.2 7.2" fill="none" stroke="#777" stroke-width="1.1" stroke-linecap="round" stroke-linejoin="round"/></svg>
<svg style="left:558px;top:118px" width="18" height="13" viewBox="0 0 18 13"><rect x="2.6" y="1.1" width="12.8" height="9.6" fill="none" stroke="#3a6ff7" stroke-width="1.2"/><path d="M.5 11.6h17" stroke="#3a6ff7" stroke-width="1.3"/></svg>
<svg style="left:585px;top:116.5px" width="12" height="16" viewBox="0 0 12 16"><rect x=".85" y=".85" width="10.3" height="13.9" rx=".6" fill="none" stroke="#333" stroke-width="1.3"/></svg>
<svg style="left:609px;top:115.5px" width="12" height="18" viewBox="0 0 12 18"><rect x="1.2" y="1.1" width="9.1" height="15.6" rx=".6" fill="none" stroke="#333" stroke-width="1.4"/></svg>
<div class="a" style="left:634px;top:113px;width:1px;height:24px;background:#e4e6ea"></div>
<svg style="left:647px;top:117.5px" width="17" height="14" viewBox="0 0 17 14"><path d="M4.3 1L.8 4.5 4.3 8M.8 4.5h9.4a5.3 5.3 0 0 1 5.3 5.3V13.2" fill="none" stroke="#a3a6ab" stroke-width="1.25" stroke-linecap="round" stroke-linejoin="round"/></svg>
<svg style="left:676px;top:117.5px" width="17" height="14" viewBox="0 0 17 14"><path d="M12.7 1l3.5 3.5-3.5 3.5M16.2 4.5H6.8A5.3 5.3 0 0 0 1.5 9.8V13.2" fill="none" stroke="#a3a6ab" stroke-width="1.25" stroke-linecap="round" stroke-linejoin="round"/></svg>
<div class="a" style="left:786px;top:113px;width:64px;height:24px;border-radius:4px;background:#0068e6"></div>
<svg style="left:798px;top:120px" width="10" height="10" viewBox="0 0 10 10"><path d="M0 1a1 1 0 0 1 1-1h6.5L10 2.5V9a1 1 0 0 1-1 1H1a1 1 0 0 1-1-1z" fill="#fff"/><rect x="2" y="1.2" width="5" height="2.3" fill="#0068e6"/><circle cx="5" cy="6.6" r="1.4" fill="#0068e6"/></svg>
<div class="t" style="left:815px;top:120px;font-size:12.5px;-webkit-text-stroke:.4px #fff;color:#fff">保存</div>
<div class="a" style="left:860px;top:113px;width:63px;height:24px;border-radius:4px;background:#e1ecff;border:1px solid #94b8fb"></div>
<svg style="left:872.8px;top:119.8px" width="12" height="10" viewBox="0 0 12 10"><ellipse cx="6" cy="5" rx="6" ry="4.8" fill="#2f74f2"/><circle cx="6" cy="4.9" r="2.1" fill="#e1ecff"/><circle cx="6" cy="4.9" r="1.2" fill="#2f74f2"/></svg>
<div class="t" style="left:888px;top:120px;font-size:12.5px;color:#2f74f2">预览</div>
<div class="a" style="left:933px;top:113px;width:63px;height:24px;border-radius:4px;background:#ffdfe0;border:1px solid #fd9a9c"></div>
<svg style="left:945px;top:118px" width="13" height="13" viewBox="0 0 13 13"><rect x="3.9" y=".9" width="5.1" height="1.2" rx=".6" fill="#f5222d"/><rect x=".6" y="2.8" width="11.7" height="1.3" rx=".5" fill="#f5222d"/><path d="M2 4h9.1v6.5a2 2 0 0 1-2 2H4a2 2 0 0 1-2-2z" fill="#f5222d"/><path d="M5.5 5v5M7.5 5v5" stroke="#ffd6d6" stroke-width=".8"/></svg>
<div class="t" style="left:961px;top:120px;font-size:12.5px;color:#f5222d">清空</div>
<div class="a" style="left:1006px;top:113px;width:1px;height:24px;background:#e4e6ea"></div>
<div class="t" style="left:1017px;top:119px;font-size:13px;color:#333">默认值:</div>
<div class="a" style="left:1065px;top:117px;width:28px;height:16px;border-radius:8px;background:#c8cacc"></div>
<div class="a" style="left:1066.5px;top:118.5px;width:13px;height:13px;border-radius:50%;background:#fff;box-shadow:0 1px 2px rgba(0,0,0,.15)"></div>
<div class="a" style="left:1104px;top:105px;width:320px;height:746px;background:#fff"></div>
<div class="a" style="left:1103px;top:105px;width:1px;height:40px;background:#e8eaee"></div>
<div class="a" style="left:1104px;top:145px;width:320px;height:1px;background:#e8eaee"></div>
<div class="t" style="left:1124px;top:118px;font-size:14px;color:#2a2d33">表单配置</div>
<div class="a" style="left:1414px;top:146px;width:10px;height:617px;border-radius:5px;background:#e3e4e6"></div>
<div class="t" style="left:1124px;top:171px;font-size:12px;color:#333">表单名称</div>
<div class="a" style="left:1124px;top:190px;width:270px;height:21px;border-radius:5px;border:1px solid #dcdfe4"></div>
<div class="t" style="left:1124px;top:232px;font-size:12px;color:#333">表单布局</div>
<div class="a" style="left:1124px;top:254px;width:16px;height:16px;border-radius:50%;background:#0068e6"></div>
<div class="a" style="left:1129px;top:259px;width:6px;height:6px;border-radius:50%;background:#fff"></div>
<div class="t" style="left:1148px;top:257px;font-size:12px;color:#333">横向</div>
<div class="a" style="left:1188px;top:254px;width:16px;height:16px;border-radius:50%;background:#fff;border:1px solid #dcdfe4"></div>
<div class="t" style="left:1212px;top:257px;font-size:12px;color:#333">竖向</div>
<div class="t" style="left:1124px;top:293px;font-size:12px;color:#333">表单布局</div>
<div class="a" style="left:1124px;top:315px;width:16px;height:16px;border-radius:50%;background:#fff;border:1px solid #dcdfe4"></div>
<div class="t" style="left:1148px;top:318px;font-size:12px;color:#333">左对齐</div>
<div class="a" style="left:1200px;top:315px;width:16px;height:16px;border-radius:50%;background:#0068e6"></div>
<div class="a" style="left:1205px;top:320px;width:6px;height:6px;border-radius:50%;background:#fff"></div>
<div class="t" style="left:1224px;top:318px;font-size:12px;color:#333">右对齐</div>
<div class="t" style="left:1124px;top:353px;font-size:12px;color:#333">允许标签换行</div>
<div class="a" style="left:1124px;top:377px;width:28px;height:16px;border-radius:8px;background:#c8cacc"></div>
<div class="a" style="left:1125.5px;top:378.5px;width:13px;height:13px;border-radius:50%;background:#fff;box-shadow:0 1px 2px rgba(0,0,0,.15)"></div>
<div class="t" style="left:1124px;top:414px;font-size:12px;color:#333">表单的尺寸</div>
<div class="a" style="left:1124px;top:436px;width:16px;height:16px;border-radius:50%;background:#fff;border:1px solid #dcdfe4"></div>
<div class="t" style="left:1148px;top:439px;font-size:12px;color:#333">大</div>
<div class="a" style="left:1176px;top:436px;width:16px;height:16px;border-radius:50%;background:#0068e6"></div>
<div class="a" style="left:1181px;top:441px;width:6px;height:6px;border-radius:50%;background:#fff"></div>
<div class="t" style="left:1200px;top:439px;font-size:12px;color:#333">中</div>
<div class="a" style="left:1228px;top:436px;width:16px;height:16px;border-radius:50%;background:#fff;border:1px solid #dcdfe4"></div>
<div class="t" style="left:1252px;top:439px;font-size:12px;color:#333">小</div>
<div class="t" style="left:1124px;top:475px;font-size:12px;color:#333">是否显示标签后面的冒号</div>
<div class="a" style="left:1124px;top:499px;width:28px;height:16px;border-radius:8px;background:#c8cacc"></div>
<div class="a" style="left:1125.5px;top:500.5px;width:13px;height:13px;border-radius:50%;background:#fff;box-shadow:0 1px 2px rgba(0,0,0,.15)"></div>
<div class="t" style="left:1124px;top:536px;font-size:12px;color:#333">标签的宽度</div>
<div class="a" style="left:1124px;top:554px;width:241px;height:24px;border-radius:5px;border:1px solid #dcdfe4"></div>
<div class="t" style="left:1133px;top:560px;font-size:12px;color:#333">125</div>
<div class="a" style="left:1365px;top:554px;width:29px;height:24px;border-radius:5px;border:1px solid #dcdfe4"></div>
<div class="t" style="left:1373px;top:560px;font-size:12px;color:#555">px</div>
<div class="t" style="left:1124px;top:597px;font-size:12px;color:#333">隐藏必填字段的标签旁边的红色星号</div>
<div class="a" style="left:1124px;top:620px;width:28px;height:16px;border-radius:8px;background:#c8cacc"></div>
<div class="a" style="left:1125.5px;top:621.5px;width:13px;height:13px;border-radius:50%;background:#fff;box-shadow:0 1px 2px rgba(0,0,0,.15)"></div>
<div class="t" style="left:1124px;top:658px;font-size:12px;color:#333">提交失败自动滚动到第一个错误字段</div>
<div class="a" style="left:1124px;top:681px;width:28px;height:16px;border-radius:8px;background:#c8cacc"></div>
<div class="a" style="left:1125.5px;top:682.5px;width:13px;height:13px;border-radius:50%;background:#fff;box-shadow:0 1px 2px rgba(0,0,0,.15)"></div>
<div class="t" style="left:1124px;top:718px;font-size:12px;color:#333">是否显示表单提交按钮</div>
<div class="a" style="left:1124px;top:742px;width:28px;height:16px;border-radius:8px;background:#0068e6"></div>
<div class="a" style="left:1138.5px;top:743.5px;width:13px;height:13px;border-radius:50%;background:#fff;box-shadow:0 1px 2px rgba(0,0,0,.15)"></div>
<div class="t" style="left:1124px;top:779px;font-size:12px;color:#333">是否显示表单重置按钮</div>
<div class="a" style="left:1124px;top:803px;width:28px;height:16px;border-radius:8px;background:#c8cacc"></div>
<div class="a" style="left:1125.5px;top:804.5px;width:13px;height:13px;border-radius:50%;background:#fff;box-shadow:0 1px 2px rgba(0,0,0,.15)"></div>
<div class="t" style="left:1124px;top:839px;font-size:12px;color:#333">表单事件</div>
<div class="a" style="left:1124px;top:850px;width:48px;height:1px;background:repeating-linear-gradient(90deg,#333 0 2px,transparent 2px 4px)"></div>
<div class="a" style="left:1440px;top:88px;width:10px;height:730px;border-radius:5px;background:#e3e4e6"></div>
<!-- MAIN_END -->
</body>
</html>
